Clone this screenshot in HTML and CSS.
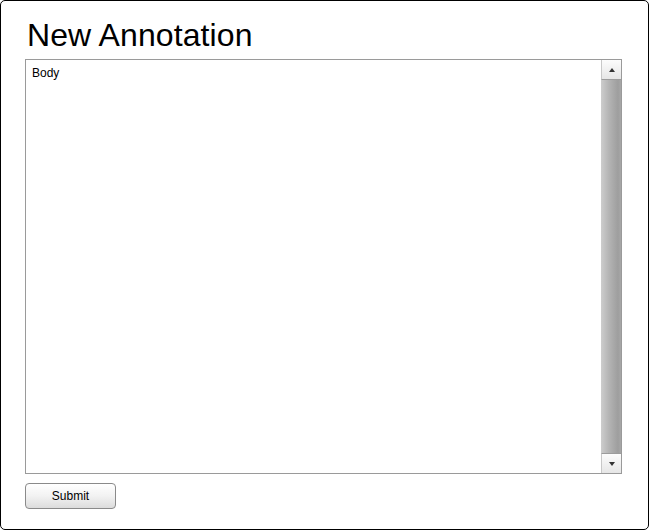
FILE: index.html
```html
<!DOCTYPE html>
<html>
<head>
<meta charset="utf-8">
<link rel="stylesheet" href="styles.css">
</head>
<body>
<div class="window">
  <h1 class="title">New Annotation</h1>
  <div class="textbox">
    <div class="text">Body</div>
    <div class="scrollbar">
      <div class="sb-btn sb-up"><span class="tri tri-up"></span></div>
      <div class="sb-track"></div>
      <div class="sb-btn sb-down"><span class="tri tri-down"></span></div>
    </div>
  </div>
  <button class="submit">Submit</button>
</div>
</body>
</html>
```

FILE: styles.css
```css
html, body {
  margin: 0;
  padding: 0;
  background: #fff;
}
.window {
  width: 649px;
  height: 530px;
  box-sizing: border-box;
  border: 1px solid #000;
  border-radius: 5px;
  padding: 16px 26px 0 24px;
  font-family: "Liberation Sans", Arial, sans-serif;
  display: flex;
  flex-direction: column;
}
.title {
  margin: 0 0 5px 2px;
  font-size: 32px;
  font-weight: normal;
  line-height: 37px;
  letter-spacing: 0.1px;
  color: #000;
}
.textbox {
  height: 415px;
  box-sizing: border-box;
  border: 1px solid #9a9a9a;
  display: flex;
}
.text {
  flex: 1;
  font-size: 12px;
  padding: 6px 6px;
  color: #000;
}
.scrollbar {
  width: 20px;
  display: flex;
  flex-direction: column;
}
.sb-btn {
  height: 19px;
  background: linear-gradient(to bottom, #fcfcfc, #e6e6e6);
  border-left: 1px solid #c8c8c8;
  display: flex;
  align-items: center;
  justify-content: center;
}
.sb-up { border-bottom: 1px solid #9c9c9c; }
.sb-down { border-top: 1px solid #9c9c9c; }
.sb-track {
  flex: 1;
  background: linear-gradient(to right, #cdcdcd, #b4b4b4 40%, #9e9e9e 85%, #a8a8a8);
}
.tri {
  width: 0;
  height: 0;
  border-left: 3px solid transparent;
  border-right: 3px solid transparent;
}
.tri-up { border-bottom: 4px solid #333; }
.tri-down { border-top: 4px solid #333; }
.submit {
  margin-top: 9px;
  width: 91px;
  height: 26px;
  border: 1px solid #8a8a8a;
  border-radius: 4px;
  background: linear-gradient(to bottom, #ffffff, #f2f2f2 50%, #dcdcdc);
  font-family: "Liberation Sans", Arial, sans-serif;
  font-size: 12px;
  color: #000;
  padding: 0;
}
```
